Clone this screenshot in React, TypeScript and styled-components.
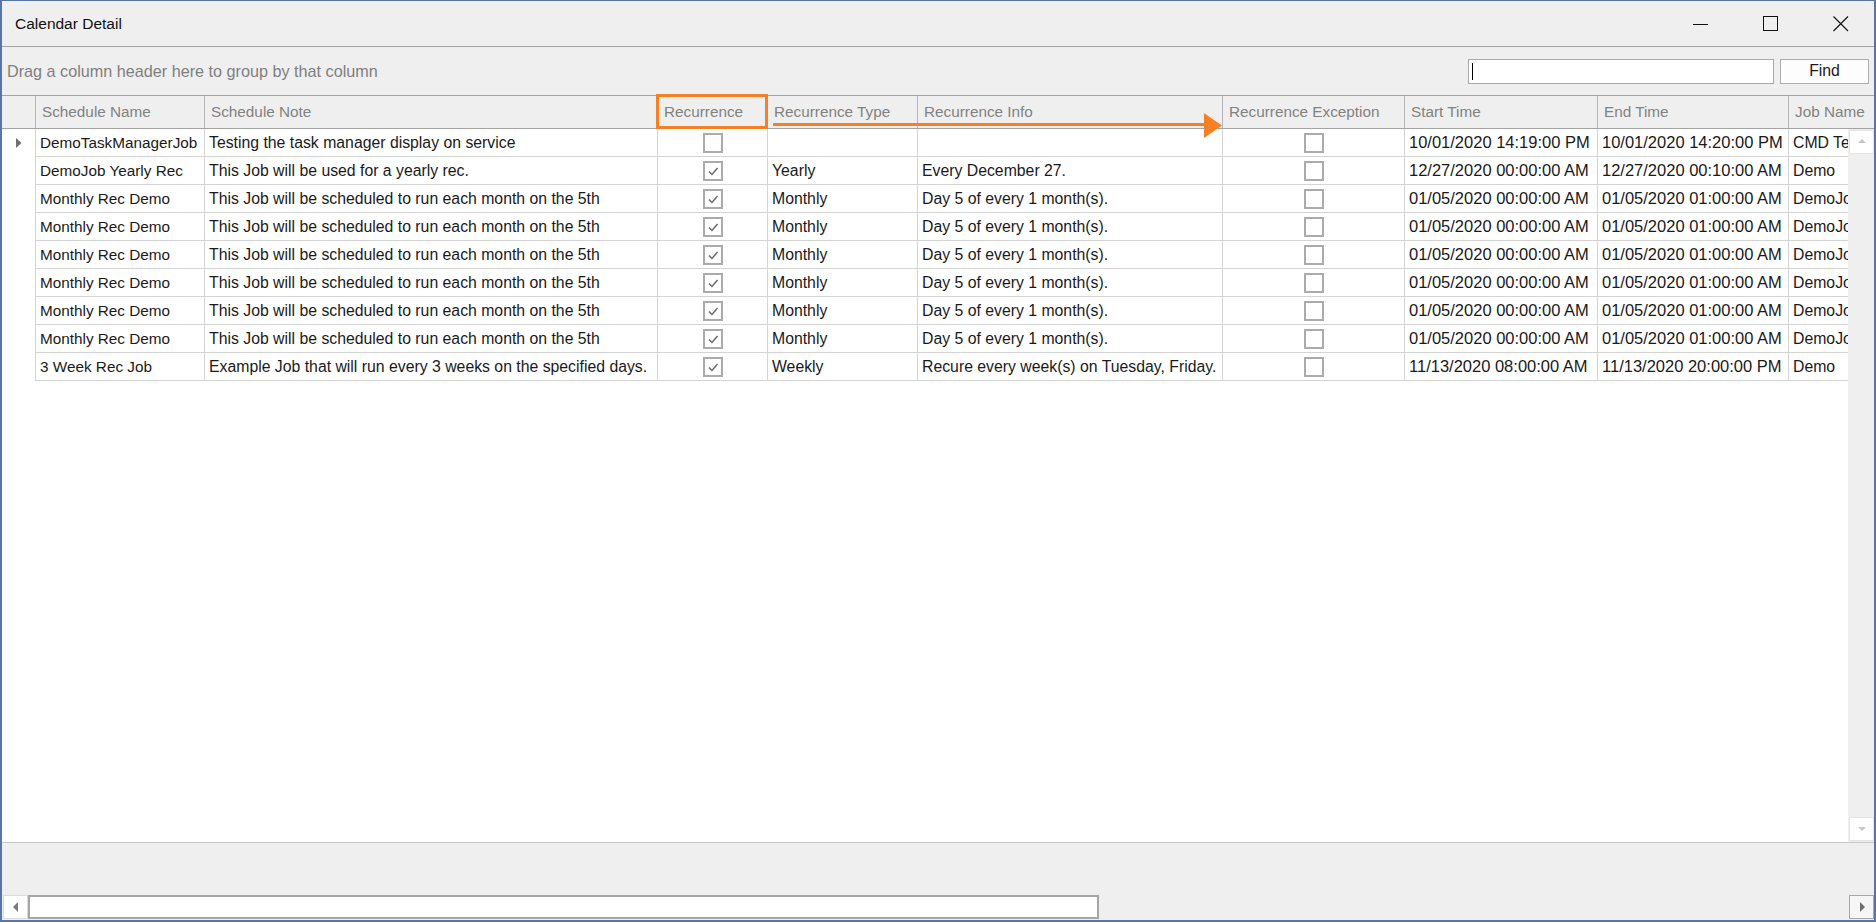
import styled, { createGlobalStyle } from "styled-components";

type Column = { key: string; title: string; w: number; size: number; check?: boolean };
type Job = {
  name: string;
  note: string;
  rec: boolean;
  type: string;
  info: string;
  exc: boolean;
  start: string;
  end: string;
  job: string;
};

const columns: Column[] = [
  { key: "name", title: "Schedule Name", w: 169, size: 15.3 },
  { key: "note", title: "Schedule Note", w: 453, size: 15.8 },
  { key: "rec", title: "Recurrence", w: 110, size: 15.8, check: true },
  { key: "type", title: "Recurrence Type", w: 150, size: 15.8 },
  { key: "info", title: "Recurrence Info", w: 305, size: 15.8 },
  { key: "exc", title: "Recurrence Exception", w: 182, size: 15.8, check: true },
  { key: "start", title: "Start Time", w: 193, size: 16.5 },
  { key: "end", title: "End Time", w: 191, size: 16.5 },
  { key: "job", title: "Job Name", w: 160, size: 15.8 },
];

const monthly: Job = {
  name: "Monthly Rec Demo",
  note: "This Job will be scheduled to run each month on the 5th",
  rec: true,
  type: "Monthly",
  info: "Day 5 of every 1 month(s).",
  exc: false,
  start: "01/05/2020 00:00:00 AM",
  end: "01/05/2020 01:00:00 AM",
  job: "DemoJob",
};

const jobs: Job[] = [
  {
    name: "DemoTaskManagerJob",
    note: "Testing the task manager display on service",
    rec: false,
    type: "",
    info: "",
    exc: false,
    start: "10/01/2020 14:19:00 PM",
    end: "10/01/2020 14:20:00 PM",
    job: "CMD Test Job",
  },
  {
    name: "DemoJob Yearly Rec",
    note: "This Job will be used for a yearly rec.",
    rec: true,
    type: "Yearly",
    info: "Every December 27.",
    exc: false,
    start: "12/27/2020 00:00:00 AM",
    end: "12/27/2020 00:10:00 AM",
    job: "Demo",
  },
  monthly,
  monthly,
  monthly,
  monthly,
  monthly,
  monthly,
  {
    name: "3 Week Rec Job",
    note: "Example Job that will run every 3 weeks on the specified days.",
    rec: true,
    type: "Weekly",
    info: "Recure every week(s) on Tuesday, Friday.",
    exc: false,
    start: "11/13/2020 08:00:00 AM",
    end: "11/13/2020 20:00:00 PM",
    job: "Demo",
  },
];

const GlobalStyle = createGlobalStyle`
  html, body { margin: 0; padding: 0; background: #efefef; }
  body {
    font-family: "Liberation Sans", Arial, sans-serif;
    font-size: 15.3px;
    color: #1a1a1a;
  }
  * { box-sizing: border-box; }
`;

const Window = styled.div`
  position: relative;
  width: 1876px;
  height: 922px;
  display: flex;
  flex-direction: column;
  background: #efefef;
  border: 2px solid #5875a5;
  border-top-width: 1px;
  overflow: hidden;
`;

const TitleBar = styled.div`
  height: 46px;
  flex-shrink: 0;
  display: flex;
  align-items: center;
  padding-left: 13px;
  border-bottom: 1px solid #a3a3a3;
`;

const Title = styled.div`
  flex: 1;
  font-size: 15.5px;
  color: #111;
`;

const WinButton = styled.div`
  width: 70px;
  height: 45px;
  padding-left: 4px;
  display: flex;
  align-items: center;
  justify-content: center;
`;

const GroupPanel = styled.div`
  height: 49px;
  flex-shrink: 0;
  display: flex;
  align-items: center;
  gap: 6px;
  padding: 0 5px 0 5px;
  border-bottom: 1px solid #a3a3a3;
`;

const GroupHint = styled.div`
  flex: 1;
  font-size: 16.2px;
  color: #7f7f7f;
`;

const SearchBox = styled.div`
  width: 306px;
  height: 25px;
  display: flex;
  align-items: center;
  padding-left: 3px;
  background: #fff;
  border: 1px solid #a9a9a9;
`;

const Caret = styled.span`
  width: 1px;
  height: 17px;
  background: #000;
`;

const FindButton = styled.button`
  width: 89px;
  height: 25px;
  padding: 0;
  font: inherit;
  font-size: 15.8px;
  color: #1a1a1a;
  background: #fdfdfd;
  border: 1px solid #adadad;
`;

const HeaderRow = styled.div`
  height: 33px;
  flex-shrink: 0;
  display: flex;
  overflow: hidden;
  border-bottom: 1px solid #a3a3a3;
`;

const HeadCell = styled.div<{ $w: number }>`
  width: ${({ $w }) => $w}px;
  flex-shrink: 0;
  display: flex;
  align-items: center;
  padding-left: 6px;
  white-space: nowrap;
  overflow: hidden;
  color: #828282;
  border-right: 1px solid #b4b4b4;
`;

const Body = styled.div`
  flex: 1;
  min-height: 0;
  display: flex;
  background: #fff;
`;

const RowsPane = styled.div`
  flex: 1;
  overflow: hidden;
`;

const Row = styled.div`
  height: 28px;
  display: flex;
`;

const Indicator = styled.div`
  width: 34px;
  flex-shrink: 0;
  display: flex;
  align-items: center;
  justify-content: center;
  border-right: 1px solid #d4d4d4;
`;

const Cell = styled.div<{ $w: number; $size: number; $center?: boolean }>`
  width: ${({ $w }) => $w}px;
  flex-shrink: 0;
  display: flex;
  align-items: center;
  justify-content: ${({ $center }) => ($center ? "center" : "flex-start")};
  padding-left: ${({ $center }) => ($center ? 0 : 4)}px;
  font-size: ${({ $size }) => $size}px;
  white-space: nowrap;
  overflow: hidden;
  border-right: 1px solid #d4d4d4;
  border-bottom: 1px solid #d4d4d4;
`;

const CheckBox = styled.div`
  width: 20px;
  height: 20px;
  display: flex;
  align-items: center;
  justify-content: center;
  background: #fff;
  border: 2px solid #ababab;
`;

const VScroll = styled.div`
  width: 26px;
  flex-shrink: 0;
  display: flex;
  flex-direction: column;
  justify-content: space-between;
  padding: 1px 0 1px 1px;
  background: #efefef;
`;

const VButton = styled.div`
  height: 24px;
  display: flex;
  align-items: center;
  justify-content: center;
  background: #fff;
  border: 1px solid #e4e4e4;
`;

const Footer = styled.div`
  height: 53px;
  flex-shrink: 0;
  border-top: 1px solid #c6c6c6;
`;

const HScroll = styled.div`
  height: 24px;
  flex-shrink: 0;
  display: flex;
  padding-left: 1px;
  margin-bottom: 1px;
`;

const HButton = styled.div<{ $dark?: boolean }>`
  width: 25px;
  flex-shrink: 0;
  display: flex;
  align-items: center;
  justify-content: center;
  background: ${({ $dark }) => ($dark ? "#f6f6f6" : "#fff")};
  border: 1px solid ${({ $dark }) => ($dark ? "#a8a8a8" : "#dcdcdc")};
`;

const Thumb = styled.div`
  width: 1071px;
  flex-shrink: 0;
  background: #fff;
  border: 2px solid #a6a6a6;
`;

const Track = styled.div`
  flex: 1;
`;

// orange callout drawn over the column headers
const Callout = styled.svg`
  position: absolute;
  left: 648px;
  top: 89px;
  pointer-events: none;
`;

const Check = () => (
  <svg width="16" height="16" viewBox="0 0 16 16">
    <polyline points="4,8.5 7,11.5 12.5,5" fill="none" stroke="#6b6b6b" strokeWidth="1.5" />
  </svg>
);

const Box = ({ on }: { on: boolean }) => <CheckBox>{on && <Check />}</CheckBox>;

const Arrow = ({ dir, color }: { dir: "up" | "down" | "left" | "right"; color: string }) => {
  const pts = {
    up: "1,6 5,2 9,6",
    down: "1,3 5,7 9,3",
    left: "7,0 2,5 7,10",
    right: "3,0 8,5 3,10",
  }[dir];
  return (
    <svg width="10" height="10" viewBox="0 0 10 10">
      <polygon points={pts} fill={color} />
    </svg>
  );
};

function cellValue(job: Job, key: string) {
  return (job as unknown as Record<string, string | boolean>)[key];
}

export default function App() {
  return (
    <>
      <GlobalStyle />
      <Window>
        <TitleBar>
          <Title>Calendar Detail</Title>
          <WinButton>
            <svg width="16" height="16" viewBox="0 0 16 16">
              <line x1="0" y1="8.5" x2="15" y2="8.5" stroke="#111" />
            </svg>
          </WinButton>
          <WinButton>
            <svg width="16" height="16" viewBox="0 0 16 16">
              <rect x="0.5" y="0.5" width="14" height="14" fill="none" stroke="#111" />
            </svg>
          </WinButton>
          <WinButton>
            <svg width="16" height="16" viewBox="0 0 16 16">
              <path d="M0.5 0.5 L15 15 M15 0.5 L0.5 15" stroke="#111" strokeWidth="1.1" />
            </svg>
          </WinButton>
        </TitleBar>

        <GroupPanel>
          <GroupHint>Drag a column header here to group by that column</GroupHint>
          <SearchBox>
            <Caret />
          </SearchBox>
          <FindButton>Find</FindButton>
        </GroupPanel>

        <HeaderRow>
          <HeadCell $w={34} />
          {columns.map((c) => (
            <HeadCell key={c.key} $w={c.w}>
              {c.title}
            </HeadCell>
          ))}
        </HeaderRow>

        <Body>
          <RowsPane>
            {jobs.map((job, i) => (
              <Row key={i}>
                <Indicator>
                  {i === 0 && (
                    <svg width="6" height="10" viewBox="0 0 6 10">
                      <polygon points="0,0 5.5,5 0,10" fill="#707070" />
                    </svg>
                  )}
                </Indicator>
                {columns.map((c) => {
                  const v = cellValue(job, c.key);
                  return (
                    <Cell key={c.key} $w={c.w} $size={c.size} $center={c.check}>
                      {c.check ? <Box on={v as boolean} /> : (v as string)}
                    </Cell>
                  );
                })}
              </Row>
            ))}
          </RowsPane>
          <VScroll>
            <VButton>
              <Arrow dir="up" color="#c6c6c6" />
            </VButton>
            <VButton>
              <Arrow dir="down" color="#c6c6c6" />
            </VButton>
          </VScroll>
        </Body>

        <Footer />

        <HScroll>
          <HButton>
            <Arrow dir="left" color="#7a7a7a" />
          </HButton>
          <Thumb />
          <Track />
          <HButton $dark>
            <Arrow dir="right" color="#6e6e6e" />
          </HButton>
        </HScroll>

        <Callout width="580" height="52" viewBox="0 0 580 52">
          <rect x="7.5" y="5.5" width="109" height="32" fill="none" stroke="#f58025" strokeWidth="3" />
          <line x1="123" y1="34.5" x2="556" y2="34.5" stroke="#f58025" strokeWidth="3" />
          <polygon points="554,23 572,35.5 554,48" fill="#f58025" />
        </Callout>
      </Window>
    </>
  );
}
